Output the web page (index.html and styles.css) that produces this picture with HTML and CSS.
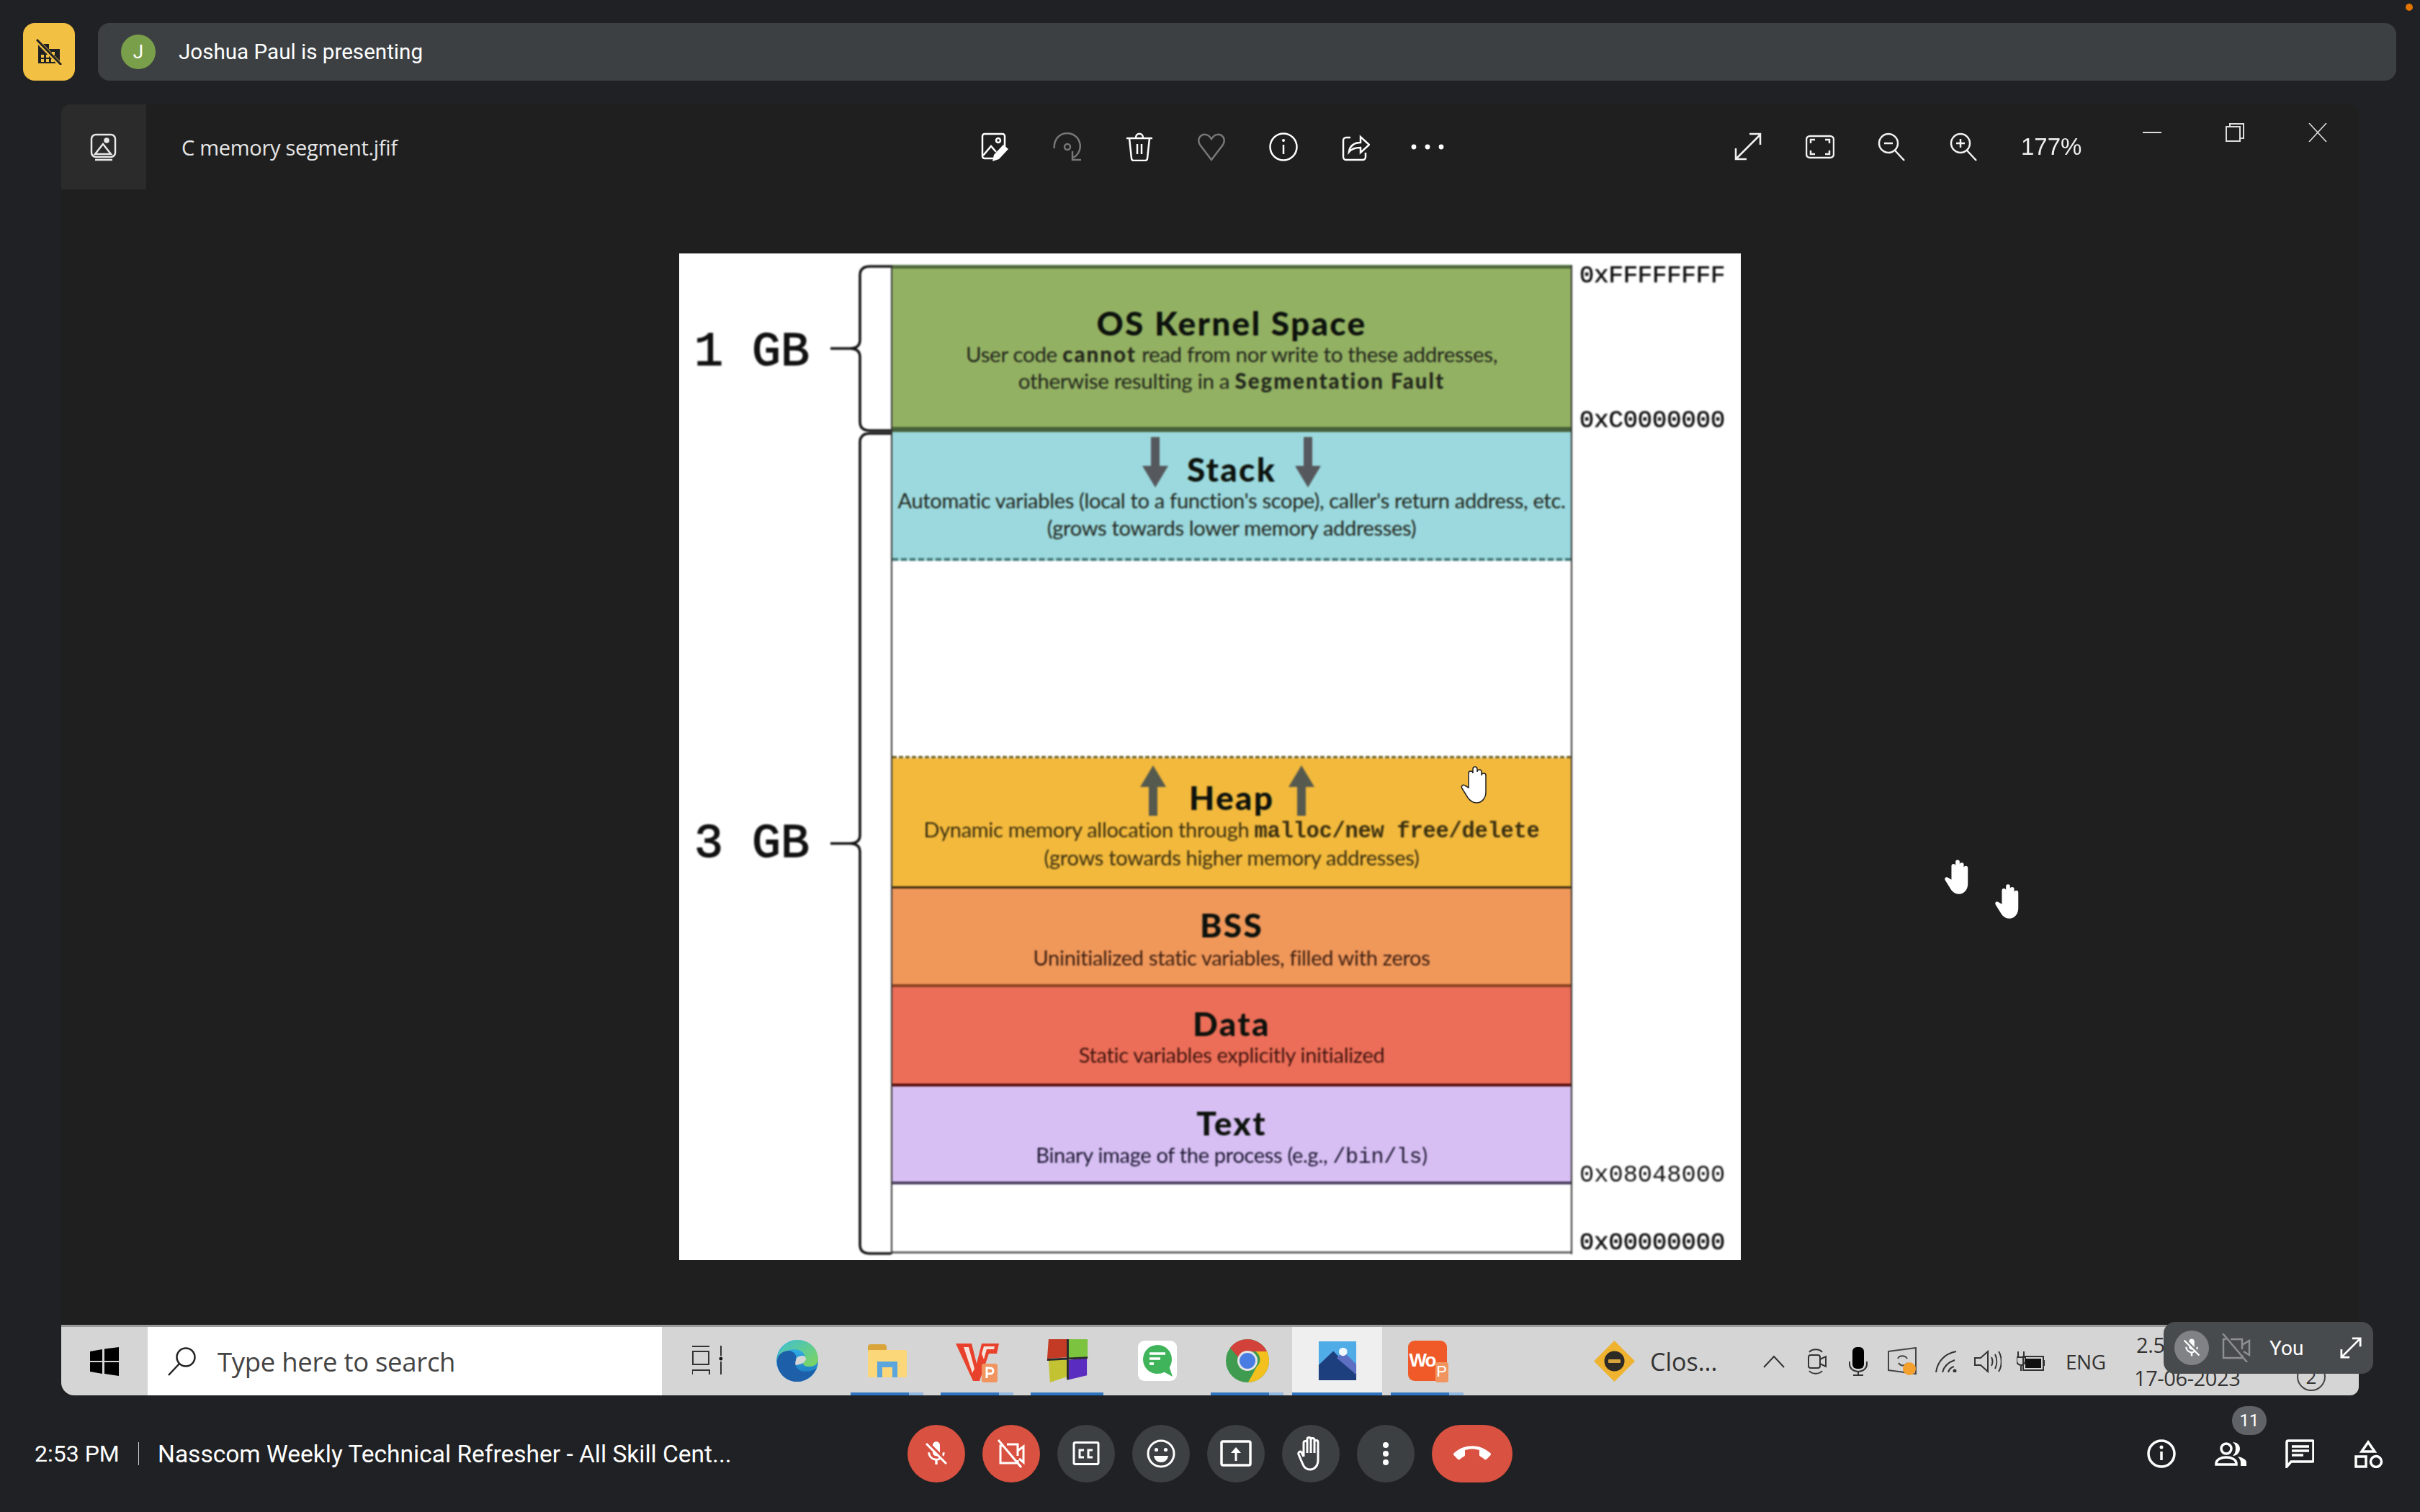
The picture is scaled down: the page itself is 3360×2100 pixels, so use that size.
FILE: index.html
```html
<!DOCTYPE html>
<html lang="en">
<head>
<meta charset="utf-8">
<title>Joshua Paul is presenting</title>
<link rel="stylesheet" href="styles.css">
</head>
<body>
<svg class="defs" width="0" height="0" aria-hidden="true">
  <symbol id="hand" viewBox="0 0 40 52">
    <path d="M11 30V10a3 3 0 0 1 6 0V4a3 3 0 0 1 6 0v4a3 3 0 0 1 6 0v5a3 3 0 0 1 6 0v23c0 9-6 15-13 15-6 0-9-3-12-7L2 31c-2-3 1-6 4-4z"/>
  </symbol>
</svg>
<div class="topbar">
  <div class="alert">
    <svg class="i36" viewBox="0 0 36 36"><path fill="#202124" fill-rule="evenodd" d="M3 7h15v7h15v20H3zM7 22v4h4v-4zm7 0v4h4v-4zm-7 6v4h4v-4zm7 0v4h4v-4zm7 0v4h4v-4zM22 18v4h4v-4z"/><path stroke="#f2c143" stroke-width="6" d="M2 3l31 32"/><path stroke="#202124" stroke-width="3" d="M1 1l34 35"/></svg>
  </div>
  <div class="presenter">
    <span class="avatar">J</span>
    <span class="presenter-name">Joshua Paul is presenting</span>
  </div>
</div>

<main class="stage">
  <div class="window">
    <header class="toolbar">
      <div class="app-tab">
        <svg class="i40" viewBox="0 0 40 40" fill="none" stroke="#e8e8e8" stroke-width="2.5"><rect x="3" y="3" width="33" height="31" rx="6"/><path d="M8 38h24"/><circle cx="24" cy="11" r="2.5" fill="#e8e8e8"/><path d="M8 30l11-14 11 14z"/></svg>
      </div>
      <div class="file-name">C memory segment.jfif</div>
      <div class="tool-group tool-main">
        <span class="tool"><svg class="i40" viewBox="0 0 40 40" fill="none" stroke="#fff" stroke-width="2.5"><path d="M20 36H5a3 3 0 0 1-3-3V5a3 3 0 0 1 3-3h25a3 3 0 0 1 3 3v15"/><circle cx="24" cy="11" r="3"/><path d="M3 32l11-13 7 8"/><path fill="#fff" stroke="none" d="M16 40l2-9 13-14 7 6-13 14z"/></svg></span>
        <span class="tool dim"><svg class="i40" viewBox="0 0 40 40" fill="none" stroke="currentColor" stroke-width="2.5"><path d="M2 22A18 18 0 1 1 28 35"/><circle cx="20" cy="20" r="4"/><path d="M27 26v12h12"/></svg></span>
        <span class="tool"><svg class="i40" viewBox="0 0 40 40" fill="none" stroke="#fff" stroke-width="2.5"><path d="M2 8h36M15 7c0-7 10-7 10 0M6 8l3 28a3 3 0 0 0 3 3h16a3 3 0 0 0 3-3l3-28M17 16v14M23 16v14"/></svg></span>
        <span class="tool dim"><svg class="i40" viewBox="0 0 40 40" fill="none" stroke="currentColor" stroke-width="2.5"><path d="M20 38L4 17C-1 8 6 2 12 3c4 0 6 3 8 6 2-3 4-6 8-6 6-1 13 5 8 14z"/></svg></span>
        <span class="tool"><svg class="i40" viewBox="0 0 40 40" fill="none" stroke="#fff" stroke-width="2.5"><circle cx="20" cy="20" r="18.5"/><path d="M20 17v13"/><circle cx="20" cy="11" r="2" fill="#fff" stroke="none"/></svg></span>
        <span class="tool"><svg class="i40" viewBox="0 0 40 40" fill="none" stroke="#fff" stroke-width="2.5"><path d="M13 7H7a4 4 0 0 0-4 4v23a4 4 0 0 0 4 4h23a4 4 0 0 0 4-4v-6"/><path d="M11 27c1-9 8-13 16-13V6l12 11-12 11v-7c-7 0-12 1-16 6z"/></svg></span>
        <span class="tool"><svg class="i48" viewBox="0 0 48 12" fill="#fff"><circle cx="5" cy="6" r="3.4"/><circle cx="24" cy="6" r="3.4"/><circle cx="43" cy="6" r="3.4"/></svg></span>
      </div>
      <div class="tool-group tool-zoom">
        <span class="tool"><svg class="i40" viewBox="0 0 40 40" fill="none" stroke="#f2f2f2" stroke-width="2.5"><path d="M3 37L37 3M22 2h15v15M3 22v15h15"/></svg></span>
        <span class="tool"><svg class="i40" viewBox="0 0 40 40" fill="none" stroke="#f2f2f2" stroke-width="2.5"><rect x="1" y="5" width="38" height="30" rx="5"/><path d="M7 15v-5h6M27 10h6v5M33 25v5h-6M13 30H7v-5"/></svg></span>
        <span class="tool"><svg class="i40" viewBox="0 0 40 40" fill="none" stroke="#f2f2f2" stroke-width="2.5"><circle cx="15" cy="15" r="13"/><path d="M24 25l13 14M9 15h12"/></svg></span>
        <span class="tool"><svg class="i40" viewBox="0 0 40 40" fill="none" stroke="#f2f2f2" stroke-width="2.5"><circle cx="15" cy="15" r="13"/><path d="M24 25l13 14M9 15h12M15 9v12"/></svg></span>
      </div>
      <span class="zoom-value">177%</span>
      <div class="win-controls">
        <span class="win-btn"><svg class="i26" viewBox="0 0 26 26" fill="none" stroke="#ddd" stroke-width="2"><path d="M0 13h26"/></svg></span>
        <span class="win-btn"><svg class="i26" viewBox="0 0 26 26" fill="none" stroke="#ddd" stroke-width="2"><rect x="1" y="5" width="19" height="20"/><path d="M6 5V1h19v20h-5"/></svg></span>
        <span class="win-btn"><svg class="i26" viewBox="0 0 26 26" fill="none" stroke="#ddd" stroke-width="1.6"><path d="M1 0l24 26M25 0L1 26"/></svg></span>
      </div>
    </header>

    <div class="canvas">
      <div class="picture">
        <div class="diagram">
          <div class="gb-col">
            <div class="gb-row gb-one">
              <span class="gb-label">1 GB</span>
              <svg class="brace" viewBox="0 0 87 232" width="87" height="232" fill="none" stroke="#111" stroke-width="3.5"><path d="M87 2H58q-14 0-14 12v90q0 12-14 12H3M87 230H58q-14 0-14-12v-90q0-12-14-12"/></svg>
            </div>
            <div class="gb-row gb-three">
              <span class="gb-label">3 GB</span>
              <svg class="brace" viewBox="0 0 87 1143" width="87" height="1143" fill="none" stroke="#111" stroke-width="3.5"><path d="M87 2H58q-14 0-14 12v545.500q0 12-14 12H3M87 1141H58q-14 0-14-12V583.500q0-12-14-12"/></svg>
            </div>
          </div>

          <div class="segments">
            <section class="seg seg-kernel">
              <h2 class="seg-title">OS Kernel Space</h2>
              <p class="seg-line">User code <b>cannot</b> read from nor write to these addresses,</p>
              <p class="seg-line">otherwise resulting in a <b>Segmentation Fault</b></p>
            </section>
            <section class="seg seg-stack">
              <div class="title-row">
                <svg class="arrow" viewBox="0 0 36 70" width="36" height="70"><path fill="#55585c" d="M12 0h12v40h12L18 70 0 40h12z"/></svg>
                <h2 class="seg-title">Stack</h2>
                <svg class="arrow" viewBox="0 0 36 70" width="36" height="70"><path fill="#55585c" d="M12 0h12v40h12L18 70 0 40h12z"/></svg>
              </div>
              <p class="seg-line">Automatic variables (local to a function's scope), caller's return address, etc.</p>
              <p class="seg-line">(grows towards lower memory addresses)</p>
            </section>
            <div class="seg seg-gap"></div>
            <section class="seg seg-heap">
              <div class="title-row">
                <svg class="arrow" viewBox="0 0 36 70" width="36" height="70"><path fill="#565a4e" d="M18 0l18 30H24v40H12V30H0z"/></svg>
                <h2 class="seg-title">Heap</h2>
                <svg class="arrow" viewBox="0 0 36 70" width="36" height="70"><path fill="#565a4e" d="M18 0l18 30H24v40H12V30H0z"/></svg>
              </div>
              <p class="seg-line">Dynamic memory allocation through <code class="seg-code">malloc/new free/delete</code></p>
              <p class="seg-line">(grows towards higher memory addresses)</p>
            </section>
            <section class="seg seg-bss">
              <h2 class="seg-title">BSS</h2>
              <p class="seg-line">Uninitialized static variables, filled with zeros</p>
            </section>
            <section class="seg seg-data">
              <h2 class="seg-title">Data</h2>
              <p class="seg-line">Static variables explicitly initialized</p>
            </section>
            <section class="seg seg-text">
              <h2 class="seg-title">Text</h2>
              <p class="seg-line">Binary image of the process (e.g., <code class="seg-path">/bin/ls</code>)</p>
            </section>
            <div class="seg seg-end"></div>
          </div>

          <div class="addr-col">
            <span class="addr addr-a">0xFFFFFFFF</span>
            <span class="addr addr-b">0xC0000000</span>
            <span class="addr addr-c">0x08048000</span>
            <span class="addr addr-d">0x00000000</span>
          </div>
        </div>
        <svg class="pointer" viewBox="0 0 40 52"><use href="#hand"/></svg>
      </div>
      <svg class="cursor-hand hand-a" viewBox="0 0 40 52"><use href="#hand"/></svg>
      <svg class="cursor-hand hand-b" viewBox="0 0 40 52"><use href="#hand"/></svg>
    </div>

    <footer class="taskbar">
      <span class="start">
        <svg class="i40" viewBox="0 0 40 40" fill="#000"><path d="M0 6l17-3v16H0zM20 2.500L40 0v19H20zM0 21h17v16L0 34zM20 21h20v19l-20-3z"/></svg>
      </span>
      <div class="search">
        <svg class="i40" viewBox="0 0 40 40" fill="none" stroke="#222" stroke-width="2.5"><circle cx="25" cy="14" r="12.500"/><path d="M16 23L1 39"/></svg>
        <span class="search-text">Type here to search</span>
      </div>
      <span class="slot">
        <svg class="i42" viewBox="0 0 42 42" fill="none" stroke="#333" stroke-width="2"><path d="M0 1h24M0 40v-6h24v6M1 8h22v18H1zM40 0v14M40 22v18"/><circle cx="40" cy="18" r="2.500" fill="#111" stroke="none"/></svg>
      </span>
      <span class="slot">
        <svg class="i60" viewBox="0 0 60 60"><defs><linearGradient id="eg" x1="0" y1="0" x2="0" y2="1"><stop offset="0" stop-color="#35c1f1"/><stop offset="1" stop-color="#1b6cb8"/></linearGradient><linearGradient id="eg2" x1="0" y1="0" x2="1" y2="1"><stop offset="0" stop-color="#3fbfd2"/><stop offset="1" stop-color="#7fd65a"/></linearGradient></defs><circle cx="30" cy="30" r="29" fill="url(#eg)"/><path fill="url(#eg2)" d="M30 1c17 0 29 12 29 27 0 6-5 10-12 10-6 0-9-2-9-5 0-2 3-3 3-7 0-7-7-12-15-12C15 14 6 21 2 30 3 14 15 1 30 1z"/><path fill="#d5d5d5" d="M26 33c0-6 5-10 11-10 3 0 5 2 5 5-2 5-6 6-9 7-4 1-7 2-7-2z"/><path fill="#1d5fa8" d="M2 30c0-9 9-14 16-14s12 6 10 13c-3 9 3 16 14 16 6 0 11-2 15-5-6 12-17 19-27 19C13 59 2 46 2 30z"/></svg>
      </span>
      <span class="slot slot-open">
        <svg class="i54" viewBox="0 0 54 46"><rect x="0" y="0" width="26" height="14" rx="4" fill="#d9a53b"/><rect x="0" y="8" width="54" height="38" rx="2" fill="#fbd779"/><path fill="#5aa6dd" d="M13 24h28v22h-7V32H20v14h-7z"/></svg>
      </span>
      <span class="slot slot-open">
        <svg class="i60" viewBox="0 0 60 60"><path fill="#e8412c" d="M0 6h22l7 28L36 6h24l-3 14H46L33 58h-9z"/><path fill="#f6e4dc" d="M11 11h7l8 30-3 6zM39 10h15l-1 4H43l-4 14-3-8z"/><rect x="36" y="34" width="22" height="26" rx="3" fill="#f0955f"/><path fill="none" stroke="#fff" stroke-width="3" d="M43 54V40h5a4 4 0 0 1 0 8h-5"/></svg>
      </span>
      <span class="slot slot-open slot-solid">
        <svg class="i60" viewBox="0 0 58 62"><path fill="#c43b25" d="M2 0h26v26L0 28z"/><path fill="#7cc33f" d="M30 0h28v26l-28 2z"/><path fill="#c3c232" d="M2 30h26v24L4 62z"/><path fill="#5a2cc0" d="M31 30l26-4v26l-26 6z"/><path fill="#2a2a2a" d="M28 0h3v58h-3zM0 28l58-3v3L0 31z"/></svg>
      </span>
      <span class="slot">
        <svg class="i56" viewBox="0 0 54 56"><rect x="0" y="0" width="54" height="56" rx="9" fill="#fff"/><circle cx="27" cy="26" r="20" fill="#3fb45a"/><path fill="#3fb45a" d="M30 40l18 10-6-18z"/><path fill="none" stroke="#fff" stroke-width="3.500" d="M16 18h22M16 25h15"/><path fill="none" stroke="#fff" stroke-width="3.500" d="M16 32h6"/></svg>
      </span>
      <span class="slot slot-open">
        <svg class="i60" viewBox="0 0 60 60"><circle cx="30" cy="30" r="30" fill="#3e9b4f"/><path fill="#d3423a" d="M6 12A30 30 0 0 1 57 17H30a13 13 0 0 0-12 9z"/><path fill="#f4c01e" d="M57 17a30 30 0 0 1-26 43l12-22a13 13 0 0 0-2-21z"/><circle cx="30" cy="30" r="14" fill="#e4e4e4"/><circle cx="30" cy="30" r="11" fill="#4a7de4"/></svg>
      </span>
      <span class="slot slot-active slot-solid">
        <svg class="i54" viewBox="0 0 54 56"><rect width="54" height="56" fill="#50ace6"/><path fill="#1e3f7d" d="M0 56V34l21-20 33 34v8z"/><path fill="#5d6fc2" d="M26 24l9-10 19 19v15z"/><circle cx="35" cy="15" r="6" fill="#eef7fd"/></svg>
      </span>
      <span class="slot slot-open">
        <span class="wps"><span class="wps-text">Wo</span><span class="wps-p">P</span></span>
      </span>

      <span class="tray-diamond">
        <svg class="i57" viewBox="0 0 57 57"><path fill="#efb32f" d="M28.500 0L57 28.500 28.500 57 0 28.500z"/><circle cx="28.500" cy="28.500" r="14" fill="#2e2b26"/><rect x="20" y="26" width="17" height="5" rx="1" fill="#d9a53b"/></svg>
      </span>
      <span class="tray-label">Clos...</span>
      <svg class="tray-caret" viewBox="0 0 30 18" fill="none" stroke="#333" stroke-width="2"><path d="M1 17L15 2l14 15"/></svg>
      <svg class="tray-cam" viewBox="0 0 28 38" fill="none" stroke="#333" stroke-width="2"><rect x="3" y="10" width="16" height="18" rx="3"/><path d="M19 16l8-4v14l-8-4M4 6c4-5 14-5 18 0M4 32c4 5 14 5 18 0"/></svg>
      <svg class="tray-mic" viewBox="0 0 26 40"><rect x="5" y="0" width="16" height="30" rx="6" fill="#000"/><path fill="none" stroke="#333" stroke-width="2" d="M1 20v4a12 10 0 0 0 24 0v-4M13 34v5M6 39h14"/></svg>
      <svg class="tray-sync" viewBox="0 0 40 40" fill="none" stroke="#444" stroke-width="2"><path d="M1 6l38-5v36L1 32z"/><path d="M14 16c2-5 10-5 13 0M27 22c-2 4-9 5-12 0"/><circle cx="30" cy="30" r="9" fill="#f3a02d" stroke="none"/></svg>
      <svg class="tray-wifi" viewBox="0 0 30 30" fill="none" stroke="#333" stroke-width="2"><path d="M1 30C3 15 13 4 29 1M10 30c2-8 8-14 17-17M18 30c1-4 4-7 8-8"/><circle cx="27" cy="28" r="2.500" fill="#333" stroke="none"/></svg>
      <svg class="tray-sound" viewBox="0 0 38 32" fill="none" stroke="#333" stroke-width="2"><path d="M1 11h8L19 2v28L9 21H1zM24 10c2 4 2 8 0 12M29 6c3 6 3 14 0 20M34 2c5 8 5 20 0 28"/></svg>
      <svg class="tray-power" viewBox="0 0 40 28" fill="none" stroke="#333" stroke-width="2"><path d="M2 0v8M10 0v8M0 8h12v5a6 6 0 0 1-12 0zM6 19v8"/><rect x="9" y="7" width="28" height="19"/><rect x="12" y="10" width="22" height="13" fill="#111" stroke="none"/><path d="M38 12v8"/></svg>
      <span class="tray-lang">ENG</span>
      <span class="tray-clock"><span class="clock-time">2.53 PM</span><span class="clock-date">17-06-2023</span></span>
      <span class="tray-notify">2</span>
    </footer>
  </div>
</main>

<footer class="callbar">
  <div class="meeting">
    <span class="meeting-time">2:53 PM</span>
    <span class="meeting-sep"></span>
    <span class="meeting-title">Nasscom Weekly Technical Refresher - All Skill Cent...</span>
  </div>
  <div class="controls">
    <button class="ctl ctl-red"><svg class="i40" viewBox="0 0 24 24" fill="#fff"><path d="M19 11h-1.700c0 .74-.16 1.430-.43 2.050l1.230 1.230c.56-.98.9-2.090.9-3.280zm-4.020.17c0-.06.02-.11.02-.17V5c0-1.660-1.340-3-3-3S9 3.340 9 5v.18l5.980 5.990zM4.270 3L3 4.270l6.010 6.010V11c0 1.660 1.330 3 2.990 3 .22 0 .44-.03.65-.08l1.660 1.660c-.71.33-1.500.52-2.310.52-2.760 0-5.300-2.100-5.300-5.100H5c0 3.410 2.720 6.230 6 6.720V21h2v-3.280c.91-.13 1.770-.45 2.540-.9L19.730 21 21 19.730 4.270 3z"/></svg></button>
    <button class="ctl ctl-red"><svg class="i40" viewBox="0 0 40 40" fill="none" stroke="#fff" stroke-width="3"><path d="M8 9H5v24h24v-4M14 7h15v16M29 16l8-6v22l-6-5"/><path d="M2 1l32 38"/></svg></button>
    <button class="ctl"><svg class="i40" viewBox="0 0 40 40" fill="none" stroke="#fff" stroke-width="3"><rect x="3" y="4.500" width="34" height="30" rx="2"/><path stroke-width="3" d="M17 15h-6v10h6M29 15h-6v10h6"/></svg></button>
    <button class="ctl"><svg class="i40" viewBox="0 0 40 40" fill="none" stroke="#fff" stroke-width="3"><circle cx="20" cy="20" r="18"/><circle cx="13.500" cy="14.500" r="2.600" fill="#fff" stroke="none"/><circle cx="26.500" cy="14.500" r="2.600" fill="#fff" stroke="none"/><path fill="#fff" stroke="none" d="M10 23h20c-1 6-5 9-10 9s-9-3-10-9z"/></svg></button>
    <button class="ctl"><svg class="i44" viewBox="0 0 44 40" fill="none" stroke="#fff" stroke-width="3.500"><rect x="2" y="3" width="40" height="33" rx="2"/><path stroke-width="3" d="M22 30V16"/><path fill="#fff" stroke="none" d="M22 11l7 8H15z"/></svg></button>
    <button class="ctl"><svg class="i-hand" viewBox="0 0 40 48" fill="none" stroke="#fff" stroke-width="3"><path d="M10 28V9a2.500 2.500 0 0 1 5 0V4a2.500 2.500 0 0 1 5 0v1a2.500 2.500 0 0 1 5 0v3a2.500 2.500 0 0 1 5 0v25c0 8-5 13-11 13-5 0-8-2-10-7L3 25c-1-3 2-5 4-3l3 6M15 8v15M20 5v18M25 7v16"/></svg></button>
    <button class="ctl"><svg class="i40" viewBox="0 0 40 40" fill="#fff"><circle cx="20" cy="8" r="4"/><circle cx="20" cy="20" r="4"/><circle cx="20" cy="32" r="4"/></svg></button>
    <button class="ctl ctl-red ctl-wide"><svg class="i48w" viewBox="0 0 24 24" fill="#fff"><path d="M12 9c-1.600 0-3.150.25-4.600.72v3.100c0 .39-.23.74-.56.9-.98.49-1.870 1.120-2.660 1.850-.18.18-.43.28-.7.28-.28 0-.53-.11-.71-.29L.29 13.080c-.18-.17-.29-.42-.29-.7 0-.28.11-.53.29-.71C3.340 8.780 7.460 7 12 7s8.660 1.780 11.710 4.670c.18.18.29.43.29.71 0 .28-.11.53-.29.71l-2.480 2.480c-.18.18-.43.29-.71.29-.27 0-.52-.11-.7-.28-.79-.74-1.690-1.360-2.670-1.850-.33-.16-.56-.5-.56-.9v-3.100C15.150 9.250 13.600 9 12 9z"/></svg></button>
  </div>
  <div class="side-actions">
    <span class="side"><svg class="i40" viewBox="0 0 40 40" fill="none" stroke="#fff" stroke-width="3.500"><circle cx="20" cy="20" r="18"/><path d="M20 17v12"/><circle cx="20" cy="11" r="2.500" fill="#fff" stroke="none"/></svg></span>
    <span class="side side-people"><svg class="i44" viewBox="0 0 44 34" fill="none" stroke="#fff" stroke-width="3.500"><circle cx="16" cy="10" r="7"/><path d="M2 32v-1c0-6 7-9 14-9s14 3 14 9v1z"/><path fill="#fff" stroke="none" d="M25 1c6 0 10 4 10 9s-4 10-10 10c3-3 4-6 4-10s-1-7-4-9zM32 21c6 1 12 4 12 8v5h-8v-5c0-3-2-6-4-8z"/></svg><span class="badge">11</span></span>
    <span class="side"><svg class="i40" viewBox="0 0 40 40" fill="none" stroke="#fff" stroke-width="3.500"><path d="M2 38V4a2 2 0 0 1 2-2h34a1 1 0 0 1 1 1v27a1 1 0 0 1-1 1H8z"/><path stroke-width="3.500" d="M9 10h24M9 16h24M9 22h16"/></svg></span>
    <span class="side"><svg class="i40" viewBox="0 0 40 40" fill="none" stroke="#fff" stroke-width="3.500"><path d="M19 4l9 13H10z"/><rect x="2" y="24" width="14" height="14"/><circle cx="30" cy="31" r="7.500"/></svg></span>
  </div>
</footer>

<aside class="self-view">
  <span class="self-mic"><svg class="i30" viewBox="0 0 24 24" fill="#fff"><path d="M19 11h-1.700c0 .74-.16 1.430-.43 2.050l1.230 1.230c.56-.98.9-2.090.9-3.280zm-4.020.17c0-.06.02-.11.02-.17V5c0-1.660-1.340-3-3-3S9 3.340 9 5v.18l5.980 5.990zM4.270 3L3 4.270l6.010 6.010V11c0 1.660 1.330 3 2.990 3 .22 0 .44-.03.65-.08l1.660 1.660c-.71.33-1.500.52-2.310.52-2.760 0-5.300-2.100-5.300-5.100H5c0 3.410 2.720 6.230 6 6.720V21h2v-3.280c.91-.13 1.770-.45 2.540-.9L19.730 21 21 19.730 4.270 3z"/></svg></span>
  <svg class="self-cam" viewBox="0 0 40 40" fill="none" stroke="#8d8f92" stroke-width="2.500"><path d="M6 8H2v26h26v-4M12 8h16v14M28 16l10-6v20l-8-5"/><path d="M1 0l34 40"/></svg>
  <span class="self-name">You</span>
  <svg class="self-expand" viewBox="0 0 32 32" fill="none" stroke="#fff" stroke-width="3"><path d="M2 30L30 2M18 2h12v12M2 18v12h12"/></svg>
</aside>
<span class="rec-dot"></span>
</body>
</html>
```
FILE: styles.css
```css
* { box-sizing: border-box; }
html, body { margin: 0; height: 100%; }
body {
  width: 3360px;
  height: 2100px;
  background: #202124;
  font-family: Roboto, "Open Sans", sans-serif;
  color: #fff;
  display: flex;
  flex-direction: column;
  overflow: hidden;
  position: relative;
}
.defs { position: absolute; }
svg { display: block; flex: none; }
.i26 { width: 26px; height: 26px; }
.i30 { width: 30px; height: 30px; }
.i36 { width: 36px; height: 36px; }
.i40 { width: 40px; height: 40px; }
.i42 { width: 42px; height: 42px; }
.i44 { width: 44px; height: 40px; }
.i48 { width: 48px; height: 12px; }
.i48w { width: 52px; height: 52px; }
.i54 { width: 54px; height: 54px; }
.i56 { width: 54px; height: 56px; }
.i57 { width: 57px; height: 57px; }
.i60 { width: 60px; height: 60px; }
.i-hand { width: 40px; height: 48px; }

/* top bar */
.topbar { display: flex; gap: 32px; padding: 32px 33px 0 32px; height: 145px; flex: none; }
.alert {
  width: 72px; height: 80px; border-radius: 16px; background: #f2c143;
  display: flex; align-items: center; justify-content: center;
}
.presenter {
  flex: 1; height: 80px; border-radius: 16px; background: #3c4043;
  display: flex; align-items: center; padding-left: 32px; gap: 32px;
}
.avatar {
  width: 48px; height: 48px; border-radius: 50%; background: #7a9f4a;
  display: flex; align-items: center; justify-content: center; font-size: 26px;
}
.presenter-name { font-size: 29.600px; }

/* window */
.stage { flex: 1; padding: 0 88px 0 85px; display: flex; min-height: 0; }
.window {
  flex: 1; height: 1793px; background: #1f1f1f; border-radius: 12px 12px 0 0;
  display: flex; flex-direction: column; filter: blur(0.6px);
}
.toolbar { height: 118px; display: flex; align-items: center; flex: none; }
.app-tab {
  width: 118px; height: 118px; background: #2b2b2b; border-radius: 12px 0 0 0;
  display: flex; align-items: center; justify-content: center; flex: none;
}
.file-name {
  width: 300px; margin-left: 49px; font-family: "Open Sans", sans-serif; font-size: 29px;
  color: #e6e6e6; white-space: nowrap; letter-spacing: -0.3px;
}
.tool-group { display: flex; }
.tool-main { margin-left: 780px; }
.tool-zoom { margin-left: 345px; }
.tool { width: 100px; height: 60px; display: flex; align-items: center; justify-content: center; color: #777; }
.zoom-value { width: 153px; padding-left: 29px; font-family: "Liberation Sans", sans-serif; font-size: 33px; color: #f0f0f0; }
.win-controls { display: flex; align-self: flex-start; }
.win-btn { width: 115px; height: 78px; display: flex; align-items: center; justify-content: center; }

.canvas { flex: 1; position: relative; display: flex; align-items: center; justify-content: center; min-height: 0; padding-bottom: 2px; }
.picture { width: 1474px; height: 1398px; background: #fff; position: relative; }
.diagram { display: flex; height: 100%; padding-top: 16px; filter: blur(0.8px); color: #111; }
.gb-col { width: 294px; flex: none; display: flex; flex-direction: column; }
.gb-row { display: flex; align-items: center; padding-left: 21px; justify-content: space-between; }
.gb-one { height: 232px; }
.gb-three { height: 1143px; }
.gb-label { font-family: "Liberation Mono", monospace; font-size: 66.700px; font-weight: 400; -webkit-text-stroke: 1.500px #111; white-space: nowrap; }
.gb-one .gb-label { padding-top: 10px; }
.gb-three .gb-label { padding-top: 2px; }

.segments { width: 946px; flex: none; height: 1374px; border: solid #333; border-width: 0 2.500px; display: flex; flex-direction: column; }
.seg { flex: none; text-align: center; font-family: Lato, sans-serif; }
.seg-title { margin: 0; font-size: 46px; line-height: 48px; font-weight: 900; letter-spacing: 2.300px; color: #0d120d; }
.seg-line { margin: 0; font-size: 29px; white-space: nowrap; letter-spacing: -0.3px; color: #22261c; }
.seg-line b { font-weight: 900; letter-spacing: 2px; }
.seg-code { font-family: "Liberation Mono", monospace; font-weight: 700; font-size: 30.500px; line-height: 1; }
.seg-path { font-family: "Liberation Mono", monospace; font-size: 30px; line-height: 1; }
.title-row { display: flex; align-items: flex-end; justify-content: center; gap: 26px; height: 69px; }
.arrow { align-self: flex-start; }

.seg-kernel { height: 232px; background: #93b162; border-top: 5px solid #4f6a3c; border-bottom: 7px solid #46603a; padding-top: 52px; }
.seg-kernel .seg-line { line-height: 37px; font-size: 29.500px; }
.seg-stack { height: 179px; background: #9bd9de; padding-top: 7px; border-bottom: 4px dashed #47797a; }
.seg-stack .seg-line { line-height: 38px; }
.seg-gap { height: 274px; background: #fff; border-bottom: 3px dashed #6b5a1c; }
.seg-heap { height: 181px; background: #f2b93c; padding-top: 10px; border-bottom: 3px solid #3a2a10; }
.seg-heap .title-row { padding-right: 12px; }
.seg-heap .seg-title { margin: 0 -6px 0 6px; }
.seg-heap .seg-line { line-height: 39px; color: #3a2f10; }
.seg-bss { height: 137px; background: #f0975a; padding-top: 27px; border-bottom: 4px solid #8a4020; }
.seg-bss .seg-line { line-height: 42px; color: #3c1f10; }
.seg-data { height: 138px; background: #ec6e58; padding-top: 27px; border-bottom: 4px solid #5a0f10; }
.seg-data .seg-line { line-height: 38px; color: #40140f; }
.seg-text { height: 136px; background: #d7bff3; padding-top: 27px; border-bottom: 4px solid #4a3f60; }
.seg-text .seg-line { line-height: 40px; color: #1b1630; }
.seg-end { height: 96px; background: #fff; border-bottom: 3px solid #666; }

.addr-col { flex: 1; display: flex; flex-direction: column; padding-left: 10px; }
.addr { font-family: "Liberation Mono", monospace; font-size: 33.700px; line-height: 40px; font-weight: 400; -webkit-text-stroke: 0.700px #111; white-space: nowrap; }
.addr-a { margin-top: -5px; }
.addr-b { margin-top: 161px; }
.addr-c { margin-top: 1008px; -webkit-text-stroke: 0; }
.addr-d { margin-top: 54px; }

.pointer, .cursor-hand { position: absolute; fill: #fff; }
.pointer { left: 1085px; top: 711px; width: 40px; height: 54px; stroke: #222; stroke-width: 1.500px; }
.cursor-hand { width: 38px; height: 50px; }
.hand-a { left: 2614px; top: 930px; }
.hand-b { left: 2684px; top: 964px; }

/* taskbar */
.taskbar { height: 98px; flex: none; background: #d5d5d5; border-top: 3px solid #9a9a9a; border-radius: 0 0 12px 18px; display: flex; align-items: center; color: #333; }
.start { width: 120px; display: flex; justify-content: center; }
.search { width: 714px; height: 95px; background: #fff; display: flex; align-items: center; gap: 29px; padding-left: 28px; }
.search-text { font-family: "Open Sans", sans-serif; font-size: 36.500px; color: #444; letter-spacing: -0.3px; }
.slot { width: 125px; height: 95px; display: flex; align-items: center; justify-content: center; position: relative; padding-bottom: 2px; }
.slot-open::after {
  content: ""; position: absolute; left: 12px; right: 12px; bottom: 0; height: 4px;
  background: linear-gradient(90deg, #2f74c0 80%, #8fb7e0 80%);
}
.slot-solid::after { background: #2f74c0; }
.slot-active { background: #efefef; }
.slot-active::after { content: ""; position: absolute; left: 0; right: 0; bottom: 0; height: 4px; background: #2f74c0; }
.wps { width: 54px; height: 56px; background: #ef5a28; border-radius: 9px; position: relative; display: flex; align-items: center; padding-left: 2px; }
.wps-text { font-family: "Liberation Sans", sans-serif; font-size: 26px; font-weight: 700; color: #fff; letter-spacing: -2px; }
.wps-p { position: absolute; right: -2px; bottom: -2px; width: 18px; height: 28px; border-radius: 3px; background: #f0955f; color: #fff; font-family: "Liberation Sans", sans-serif; font-size: 22px; text-align: center; }

.tray-diamond { margin-left: 169px; }
.tray-label { margin-left: 21px; width: 89px; font-family: "Open Sans", sans-serif; font-size: 34px; }
.tray-caret { width: 30px; height: 18px; margin-left: 68px; }
.tray-cam { width: 28px; height: 38px; margin-left: 30px; }
.tray-mic { width: 26px; height: 40px; margin-left: 31px; }
.tray-sync { width: 40px; height: 40px; margin-left: 28px; }
.tray-wifi { width: 30px; height: 30px; margin-left: 26px; }
.tray-sound { width: 38px; height: 32px; margin-left: 24px; }
.tray-power { width: 40px; height: 28px; margin-left: 21px; }
.tray-lang { margin-left: 28px; width: 55px; font-family: "Open Sans", sans-serif; font-size: 28px; letter-spacing: -0.5px; }
.tray-clock { margin-left: 40px; width: 153px; display: flex; flex-direction: column; gap: 6px; font-family: "Open Sans", sans-serif; font-size: 29px; line-height: 40px; letter-spacing: -0.4px; white-space: nowrap; }
.clock-time { padding-left: 3px; }
.tray-notify { margin-left: 73px; margin-top: 42px; width: 40px; height: 40px; border-radius: 50%; border: 2px solid #444; text-align: center; font-family: "Open Sans", sans-serif; font-size: 26px; line-height: 36px; }

/* call bar */
.callbar { height: 162px; flex: none; display: flex; align-items: center; padding-right: 23px; }
.meeting { width: 1260px; flex: none; padding-left: 48px; display: flex; align-items: center; }
.meeting-time { width: 119px; font-size: 32px; white-space: nowrap; }
.meeting-sep { width: 1px; height: 32px; background: #d0d0d0; margin-left: 25px; }
.meeting-title { margin-left: 26px; font-size: 33.500px; white-space: nowrap; }
.controls { display: flex; gap: 24px; width: 840px; flex: none; }
.ctl {
  width: 80px; height: 80px; border-radius: 50%; border: 0; padding: 0; background: #3c4043;
  display: flex; align-items: center; justify-content: center; color: #fff;
}
.ctl-red { background: #d95140; }
.ctl-wide { width: 112px; border-radius: 40px; }
.side-actions { margin-left: auto; display: flex; }
.side { width: 96px; height: 40px; display: flex; align-items: center; justify-content: center; position: relative; }
.badge {
  position: absolute; left: 50px; top: -46px; width: 48px; height: 40px; border-radius: 20px; background: #5f6368;
  display: flex; align-items: center; justify-content: center; font-size: 24px;
}

/* floating self tile */
.self-view {
  position: absolute; left: 3004px; top: 1836px; width: 291px; height: 72px; border-radius: 16px; background: #484b4e;
  display: flex; align-items: center; padding-left: 15px;
}
.self-mic { width: 48px; height: 48px; border-radius: 50%; background: #808285; display: flex; align-items: center; justify-content: center; }
.self-cam { width: 40px; height: 40px; margin-left: 18px; }
.self-name { margin-left: 26px; font-size: 28px; width: 48px; }
.self-expand { width: 30px; height: 32px; margin-left: 50px; }
.rec-dot { position: absolute; left: 3340px; top: 5px; width: 10px; height: 10px; border-radius: 50%; background: #e37400; }
```
